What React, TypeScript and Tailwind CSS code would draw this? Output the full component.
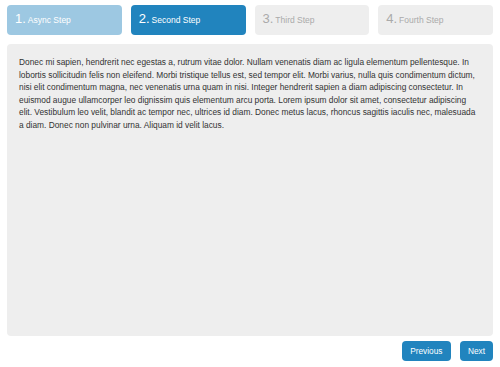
const steps = [
  { num: "1.", label: "Async Step", state: "done" },
  { num: "2.", label: "Second Step", state: "current" },
  { num: "3.", label: "Third Step", state: "disabled" },
  { num: "4.", label: "Fourth Step", state: "disabled" },
];

const stateClass: Record<string, string> = {
  done: "bg-[#9dc8e2] text-white",
  current: "bg-[#2184be] text-white",
  disabled: "bg-[#eeeeee] text-[#aaaaaa]",
};

const lines = [
  "Donec mi sapien, hendrerit nec egestas a, rutrum vitae dolor. Nullam venenatis diam ac ligula elementum pellentesque. In",
  "lobortis sollicitudin felis non eleifend. Morbi tristique tellus est, sed tempor elit. Morbi varius, nulla quis condimentum dictum,",
  "nisi elit condimentum magna, nec venenatis urna quam in nisi. Integer hendrerit sapien a diam adipiscing consectetur. In",
  "euismod augue ullamcorper leo dignissim quis elementum arcu porta. Lorem ipsum dolor sit amet, consectetur adipiscing",
  "elit. Vestibulum leo velit, blandit ac tempor nec, ultrices id diam. Donec metus lacus, rhoncus sagittis iaculis nec, malesuada",
  "a diam. Donec non pulvinar urna. Aliquam id velit lacus.",
];

export default function App() {
  return (
    <div
      className="w-[500px] h-[367px] bg-white px-[7px] pt-[5px]"
      style={{ fontFamily: '"Liberation Sans", Arial, sans-serif' }}
    >
      <ul className="flex gap-[9px]">
        {steps.map((s) => (
          <li
            key={s.label}
            className={`flex-1 h-[30px] rounded-[4px] flex items-baseline pl-[8px] pt-[7px] ${stateClass[s.state]}`}
          >
            <span className="text-[13px] leading-[14px] mr-[2px]">{s.num}</span>
            <span className="text-[8.5px] leading-[14px]">{s.label}</span>
          </li>
        ))}
      </ul>

      <div className="mt-[9px] h-[292px] rounded-[4px] bg-[#eeeeee] pl-[12px] pr-[6px] pt-[12px] overflow-hidden">
        <p className="text-[8.35px] leading-[12.6px] text-[#333333] whitespace-nowrap">
          {lines.map((l, i) => (
            <span key={i}>
              {l}
              {i < lines.length - 1 && <br />}
            </span>
          ))}
        </p>
      </div>

      <div className="mt-[5px] flex justify-end gap-[9px]">
        <button className="h-[20px] px-[8.5px] rounded-[4px] bg-[#2184be] text-white text-[8.3px]">
          Previous
        </button>
        <button className="h-[20px] px-[8px] rounded-[4px] bg-[#2184be] text-white text-[8.3px]">
          Next
        </button>
      </div>
    </div>
  );
}
